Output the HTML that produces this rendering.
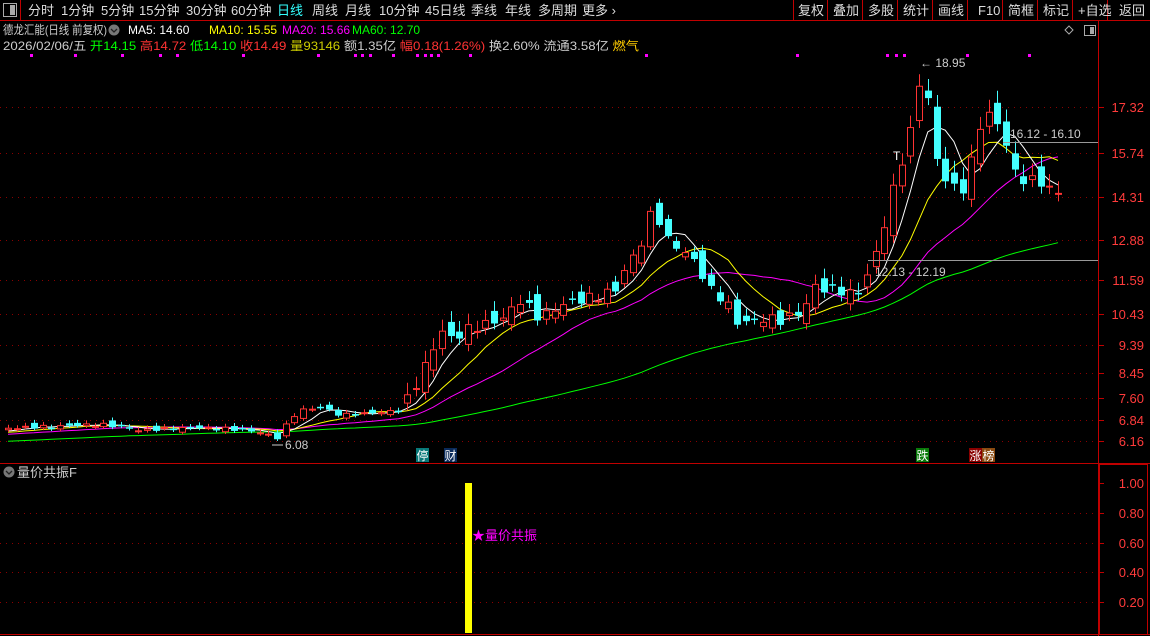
<!DOCTYPE html>
<html><head><meta charset="utf-8"><style>
body{margin:0;background:#000;width:1150px;height:636px;overflow:hidden;font-family:"Liberation Sans","Noto Sans CJK SC",sans-serif;}
#w{position:relative;width:1150px;height:636px;}
</style></head><body><div id="w">
<svg id="s" width="1150" height="636" style="position:absolute;left:0;top:0" font-family="Liberation Sans, Noto Sans CJK SC, sans-serif"></svg>
</div>
<script>
(function(){
var s=document.getElementById('s'),h='';
function L(x1,y1,x2,y2,c,d,w){h+='<line x1="'+x1+'" y1="'+y1+'" x2="'+x2+'" y2="'+y2+'" stroke="'+c+'" stroke-width="'+(w||1)+'"'+(d?' stroke-dasharray="'+d+'"':'')+'/>';}
function T(x,y,t,c,sz,a,tl){h+='<text x="'+x+'" y="'+y+'" fill="'+c+'" font-size="'+(sz||13)+'"'+(a?' text-anchor="'+a+'"':'')+(tl?' textLength="'+tl+'" lengthAdjust="spacingAndGlyphs"':'')+'>'+t+'</text>';}
function R(x,y,w,hh,f,st){h+='<rect x="'+x+'" y="'+y+'" width="'+w+'" height="'+hh+'" fill="'+f+'"'+(st?' stroke="'+st+'"':'')+'/>';}
L(0,20.5,1150,20.5,'#c00000');
R(3.5,3.5,13,13,'none','#aaa');R(10,5,5,10,'#aaa');
L(20.5,0,20.5,20,'#c00000');
var tb=[[28,'分时'],[61,'1分钟'],[101,'5分钟'],[139,'15分钟'],[186,'30分钟'],[231,'60分钟'],[277,'日线'],[312,'周线'],[345,'月线'],[379,'10分钟'],[425,'45日线'],[471,'季线'],[505,'年线'],[538,'多周期'],[582,'更多 ›']];
tb.forEach(function(a){T(a[0],15,a[1],a[1]=='日线'?'#3ff':'#ddd',13);});
var rb=[[795,'复权'],[830,'叠加'],[865,'多股'],[900,'统计'],[935,'画线'],[975,'F10'],[1005,'简框'],[1040,'标记'],[1075,'+自选'],[1116,'返回']];
[793,827,862,897,932,967,1002,1037,1072,1107].forEach(function(x){L(x+.5,0,x+.5,20,'#c00000');});
rb.forEach(function(a){T(a[0]+3,15,a[1],'#ddd',13);});
T(3,34,'德龙汇能(日线 前复权)','#ccc',12,null,104);
h+='<circle cx="114" cy="30" r="5.5" fill="#777"/><path d="M111 29l3 3 3-3" stroke="#222" fill="none" stroke-width="1.3"/>';
h+='<text y="34" font-size="12"><tspan x="128" fill="#fff">MA5: 14.60</tspan><tspan x="209" fill="#ff0">MA10: 15.55</tspan><tspan x="282" fill="#f0f">MA20: 15.66</tspan><tspan x="352" fill="#0f0">MA60: 12.70</tspan></text>';
h+='<text y="50" font-size="12" textLength="636" lengthAdjust="spacingAndGlyphs" x="3"><tspan fill="#ccc">2026/02/06/五 </tspan><tspan fill="#0f0">开14.15 </tspan><tspan fill="#f33">高14.72 </tspan><tspan fill="#0f0">低14.10 </tspan><tspan fill="#f33">收14.49 </tspan><tspan fill="#cc0">量93146 </tspan><tspan fill="#ccc">额1.35亿 </tspan><tspan fill="#f33">幅0.18(1.26%) </tspan><tspan fill="#ccc">换2.60% 流通3.58亿 </tspan><tspan fill="#fc0">燃气</tspan></text>';
h+='<path d="M1069 26l4 4-4 4-4-4z" fill="none" stroke="#aaa"/>';R(1084.5,25.5,11,10,'none','#aaa');R(1090,27,4,7,'#aaa');
[31,75,122,160,177,243,318,355,362,370,393,417,425,431,438,470,646,797,887,896,904,967,1029].forEach(function(x){R(x-1,54,3,3,'#f0f');});
L(1098.5,20,1098.5,636,'#c00000');
L(0,463.5,1150,463.5,'#c00000');
R(1099.5,464.5,48,170,'none','#c00000');L(0,634.5,1150,634.5,'#c00000');
var ax=[[107,'17.32'],[153,'15.74'],[197,'14.31'],[240,'12.88'],[280,'11.59'],[314,'10.43'],[345,'9.39'],[373,'8.45'],[398,'7.60'],[420,'6.84'],[441,'6.16']];
ax.forEach(function(a){L(0,a[0]+.5,1096,a[0]+.5,'#8b0000','1,5');L(1098,a[0]+.5,1104,a[0]+.5,'#c00000');T(1144,a[0]+5,a[1],'#ff3b3b',13,'end');});
var bx=[[483,'1.00'],[513,'0.80'],[543,'0.60'],[572,'0.40'],[602,'0.20']];
bx.forEach(function(a,i){if(i)L(0,a[0]+.5,1096,a[0]+.5,'#8b0000','1,5');L(1098,a[0]+.5,1104,a[0]+.5,'#c00000');T(1144,a[0]+5,a[1],'#ff3b3b',13,'end');});
var an=[[0,428],[60,426],[100,424],[140,430],[180,428],[220,428],[260,432],[278,438],[290,418],[300,410],[320,407],[340,415],[370,413],[400,410],[410,395],[420,375],[432,350],[442,330],[452,340],[465,330],[480,325],[500,320],[520,300],[540,318],[560,305],[580,300],[600,295],[615,290],[628,262],[640,248],[648,215],[658,218],[667,240],[682,250],[695,262],[710,290],[725,300],[737,322],[750,322],[765,318],[780,320],[795,315],[806,305],[815,285],[825,290],[840,290],[850,294],[862,290],[872,262],[882,235],[890,200],[900,165],[910,135],[918,80],[928,100],[938,170],[948,182],[958,192],[967,185],[975,140],[985,110],[995,120],[1005,140],[1015,175],[1025,180],[1035,180],[1045,185],[1058,193]];
function iy(x){for(var i=1;i<an.length;i++)if(x<=an[i][0]){var a=an[i-1],b=an[i];return a[1]+(b[1]-a[1])*(x-a[0])/(b[0]-a[0]);}return an[an.length-1][1];}
var N=122,sp=(1058-8)/(N-1),cl=[],xs=[];
for(var i=0;i<N;i++){var x=8+i*sp;xs.push(x);var big=iy(x)<400?1:0.35;cl.push(iy(x)+Math.sin(i*2.7)*5*big);}
var pre=[];for(var i=0;i<60;i++)pre.push(452-i*0.35);
var all=pre.concat(cl);
function ma(n,c){var p='';for(var i=0;i<N;i++){var k=i+60,sm=0;for(var j=0;j<n;j++)sm+=all[k-j];p+=(i?'L':'M')+xs[i].toFixed(1)+' '+(sm/n).toFixed(1);}h+='<path d="'+p+'" fill="none" stroke="'+c+'" stroke-width="1"/>';}
ma(60,'#0f0');ma(20,'#f0f');ma(10,'#ff0');ma(5,'#fff');
for(var i=0;i<N;i++){var c=cl[i],o=(i?cl[i-1]:c)+Math.sin(i*1.3+1)*(iy(xs[i])<400?9:3);
var tp=Math.min(o,c),bt=Math.max(o,c);if(bt-tp<1.5)bt=tp+1.5;var wk=iy(xs[i])<400?4+Math.abs(Math.sin(i*3.1))*8:3;
var cx=Math.round(xs[i]);var up=o>c;var col=up?'#ff3333':'#4ff';
L(cx+.5,tp-wk,cx+.5,bt+wk*0.6,col);
if(up){R(cx-2.5,tp+.5,6,Math.max(1,bt-tp-1),'#000',col);}else R(cx-3,tp,7,bt-tp,col);}
L(868,260.5,1098,260.5,'#999');T(875,276,'12.13 - 12.19','#ccc',12);
L(1003,142.5,1098,142.5,'#999');T(1010,138,'16.12 - 16.10','#ccc',12);
T(920,67,'← 18.95','#ccc',12);T(285,449,'6.08','#ccc',12);L(272,445,283,445,'#ccc');
T(893,160,'T','#fff',12);
function badge(x,t,bg){R(x,448,13,14,bg);T(x+0.5,460,t,'#fff',12);}
badge(416,'停','#087878');badge(444,'财','#0a2a5a');badge(916,'跌','#0a7a0a');badge(969,'涨','#8a0000');badge(982,'榜','#8a4a10');
h+='<circle cx="9" cy="472" r="5.5" fill="#777"/><path d="M6 471l3 3 3-3" stroke="#222" fill="none" stroke-width="1.3"/>';
T(17,477,'量价共振F','#ccc',13);
R(465,483,7,150,'#ff0');T(472,540,'★量价共振','#f0f',13);
s.innerHTML=h;
})();
</script>
</body></html>
